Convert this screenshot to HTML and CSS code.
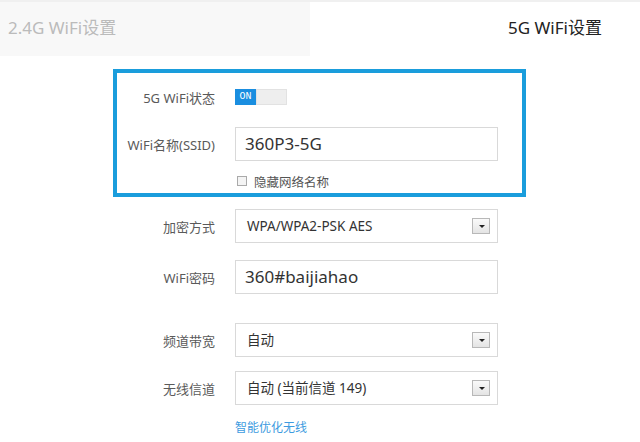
FILE: index.html
```html
<!DOCTYPE html>
<html lang="zh-CN">
<head>
  <meta charset="UTF-8">
  <meta name="viewport" content="width=device-width, initial-scale=1.0">
  <title>5G WiFi设置</title>
  <link rel="stylesheet" href="styles.css">
</head>
<body>
  <div class="tabs">
    <div class="tab">2.4G WiFi设置</div>
    <div class="tab active">5G WiFi设置</div>
  </div>
  <div class="form">
    <div class="box">
      <div class="row row-status">
        <label class="label">5G WiFi状态</label>
        <span class="switch"><span class="switch-on">ON</span><span class="switch-off"></span></span>
      </div>
      <div class="row row-ssid">
        <label class="label">WiFi名称(SSID)</label>
        <div class="field big">360P3-5G</div>
      </div>
      <div class="row row-check">
        <span class="label"></span>
        <span class="check"><span class="check-box"></span>隐藏网络名称</span>
      </div>
    </div>
    <div class="row row-enc">
      <label class="label">加密方式</label>
      <div class="field select">WPA/WPA2-PSK AES<span class="arrow"></span></div>
    </div>
    <div class="row row-pwd">
      <label class="label">WiFi密码</label>
      <div class="field big">360#baijiahao</div>
    </div>
    <div class="row row-band">
      <label class="label">频道带宽</label>
      <div class="field select">自动<span class="arrow"></span></div>
    </div>
    <div class="row row-chan">
      <label class="label">无线信道</label>
      <div class="field select">自动 (当前信道 149)<span class="arrow"></span></div>
    </div>
    <div class="row row-link">
      <span class="label"></span>
      <a class="link" href="#">智能优化无线</a>
    </div>
  </div>
</body>
</html>
```

FILE: styles.css
```css
*{
  margin: 0;
  padding: 0;
  box-sizing: border-box;
}
body{
  width: 640px;
  height: 442px;
  background: #fff;
  font-family: "Noto Sans", "Noto Sans CJK SC", sans-serif;
  color: #555;
  overflow: hidden;
}
.tabs{
  display: flex;
  height: 56px;
  border-top: 2px solid #f0f0f0;
}
.tab{
  width: 310px;
  background: #f8f8f8;
  color: #bbb;
  font-size: 17px;
  line-height: 52px;
  padding-left: 8px;
}
.tab.active{
  flex: 1;
  background: #fff;
  color: #222;
  padding-left: 198px;
}
.form{
  margin: 13px 0 0 113px;
  width: 413px;
  padding-left: 4px;
}
.box{
  margin-left: -4px;
  border: 4px solid #1a9ddc;
  padding: 16px 0 4px 0;
}
.row{
  display: flex;
  align-items: center;
}
.label{
  width: 98px;
  margin-right: 20px;
  text-align: right;
  font-size: 13px;
  color: #5a5a5a;
  flex-shrink: 0;
}
.row-status{ height: 16px; }
.row-ssid{ margin-top: 22px; }
.row-check{ margin-top: 12px; height: 16px; }
.row-enc{ margin-top: 12px; }
.row-pwd{ margin-top: 17px; }
.row-band{ margin-top: 29px; }
.row-chan{ margin-top: 14px; }
.row-link{ margin-top: 14px; height: 16px; }
.switch{
  display: flex;
  width: 52px;
  height: 16px;
}
.switch-on{
  width: 21px;
  background: #1a8ee0;
  color: #fff;
  font-family: "Liberation Mono", monospace;
  font-size: 10px;
  line-height: 16px;
  text-align: center;
}
.switch-off{
  flex: 1;
  background: #eee;
  border: 1px solid #e2e2e2;
}
.field{
  position: relative;
  width: 263px;
  height: 34px;
  border: 1px solid #d9d9d9;
  background: #fff;
  color: #333;
  line-height: 32px;
  padding-left: 11px;
  font-size: 13.5px;
}
.field.big{
  font-size: 17px;
  padding-left: 9px;
}
.arrow{
  position: absolute;
  right: 7px;
  top: 8px;
  width: 18px;
  height: 16px;
  border: 1px solid #b8b8b8;
  background: linear-gradient(#fafafa, #e4e4e4);
}
.arrow::after{
  content: "";
  position: absolute;
  left: 6px;
  top: 6px;
  border-left: 3px solid transparent;
  border-right: 3px solid transparent;
  border-top: 3px solid #222;
}
.check{
  display: flex;
  align-items: center;
  font-size: 12.5px;
  color: #555;
}
.check-box{
  width: 10px;
  height: 10px;
  margin: 0 7px 0 2px;
  border: 1px solid #aaa;
  background: #f4f4f4;
}
.link{
  font-size: 12px;
  color: #3d9be0;
  text-decoration: none;
}
```
